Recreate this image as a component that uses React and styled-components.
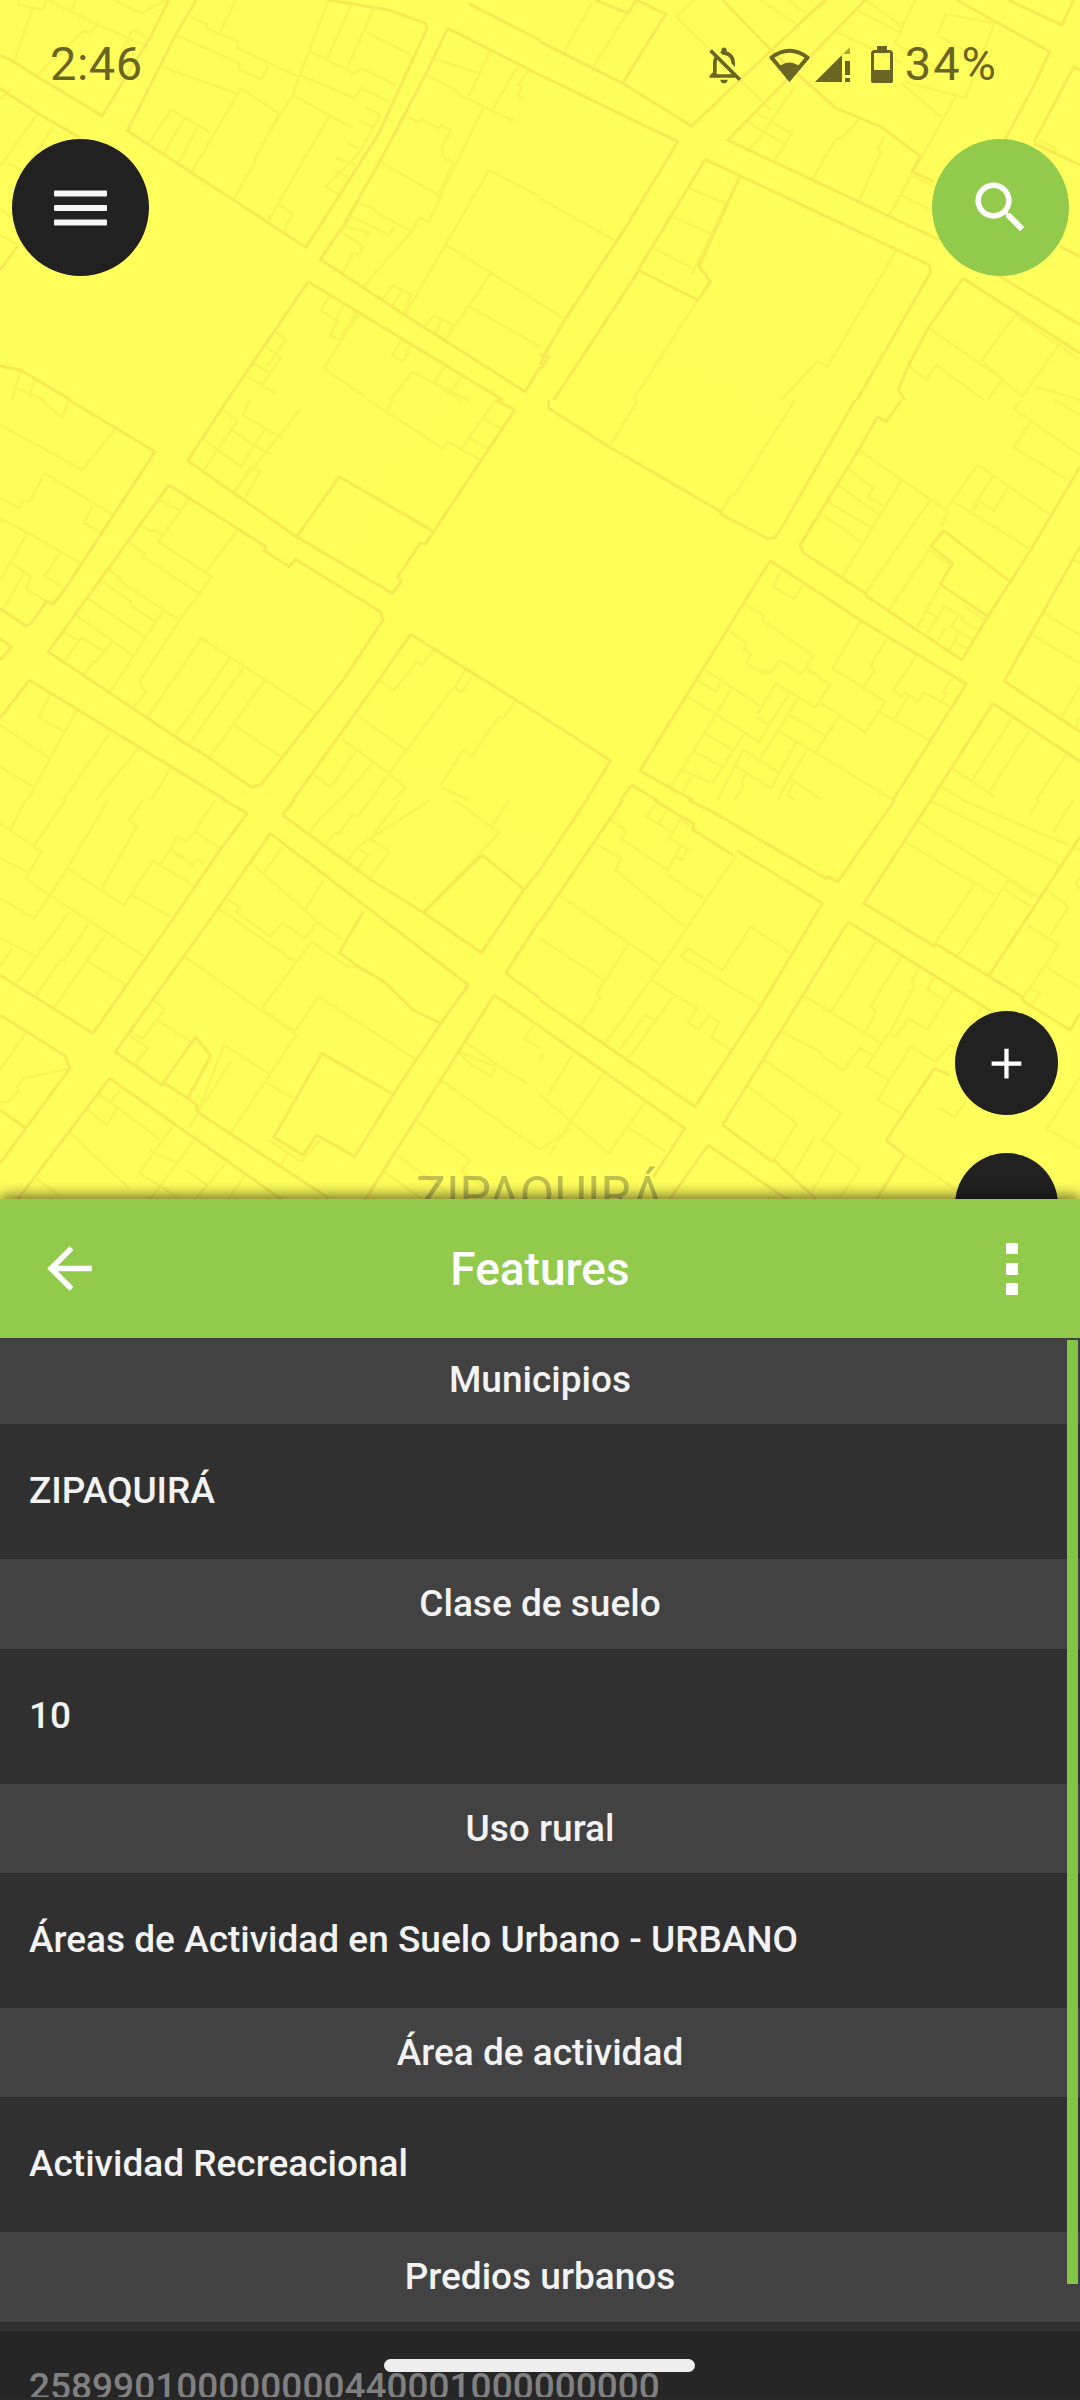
import styled, { createGlobalStyle } from 'styled-components';

// map lines traced per tile, in tile coords (1568x1200 for a 540x400 piece of the map)
const MAP_TILES = [
  {
    x: 0, y: 0,
    strong: [
      '0,165 40,185 105,228 297,347 360,240 435,115 490,0',
      '0,265 110,340 235,415',
      '570,0 510,105 370,392 888,742 980,595 1100,400 1240,85 1235,70 1130,30 955,0',
      '1300,85 1240,215 1100,490 995,680 930,778 1175,945 1525,1175 1568,1100',
      '1300,85 1568,225',
      '895,845 660,1200',
      '895,845 1460,1200',
      '1360,10 1520,95 1568,120',
      '0,1098 60,1110 205,1200',
      '50,740 0,810',
    ],
    weak: [
      '140,0 285,75 430,140', '330,0 410,40 480,0', '50,0 55,15 125,28 135,0', '95,25 40,185', '220,0 205,40',
      '285,75 265,95 240,95 105,228', '385,90 430,115', '385,90 355,150',
      '550,50 600,72 600,85 690,125 690,145 870,232', '640,95 685,0', '510,105 695,190 695,210 760,238 780,195',
      '470,200 685,280', '700,265 810,340', '700,265 555,518', '498,330 430,430', '498,330 615,400', '535,355 475,460',
      '575,378 518,490', '810,340 780,400 740,475 740,490 715,530 680,598', '955,0 870,225 850,285 780,400',
      '850,285 1025,385', '955,350 780,660', '810,615 850,640 825,692', '900,155 1030,220 1050,205 1150,255',
      '870,225 1030,295 1050,265 1130,305', '1020,15 950,175', '1085,25 1010,200', '1060,95 1195,165',
      '1060,320 1105,345 1035,470 945,560 985,585', '1040,360 1090,385', '1010,430 1050,450', '975,475 1030,495',
      '970,510 1010,530', '1245,170 1390,220', '1425,150 1360,290', '1240,225 1330,275 1335,285 1490,362',
      '1505,195 1430,330', '1535,210 1505,255 1515,260 1505,285 1525,298', '1405,320 1280,585',
      '1180,350 1220,368 1225,358 1275,385 1280,375 1310,390 1285,435 1285,470 1315,490 1275,580',
      '1105,485 1280,590 1245,665 1220,652 1195,695 1090,635 1085,625 1040,610 1000,680 1070,695 1060,710',
      '1020,650 1130,705 1145,680', '990,695 1055,740 1040,765 1025,760 995,820', '1195,695 1055,860',
      '1420,510 1175,945', '1420,510 1568,590', '1295,735 1568,910', '1425,820 1290,1025', '1365,920 1568,1040',
      '1140,855 1110,900', '1140,855 1195,885 1170,940', '1165,875 1140,915', '1260,945 1230,985',
      '1260,945 1315,975 1295,1025', '1285,960 1260,1005', '930,930 960,885', '930,930 980,965 960,1005 985,1020 1035,935',
      '1000,910 975,960', '800,995 830,1020 775,1100', '775,1040 815,1075 760,1155', '735,1090 785,1120', '710,1125 800,1180',
      '1165,1020 1140,1065 1170,1085 1195,1035', '940,1105 1045,935', '940,1105 1060,1190', '1195,1115 1135,1200',
      '1195,1115 1360,1200', '1290,1100 1260,1150', '1340,1130 1305,1180', '1260,1150 1340,1200', '60,1110 35,1200',
      '100,1140 85,1195', '50,1165 130,1200', '0,300 30,270', '110,340 0,500', '155,380 70,510', '25,490 70,515',
      '0,625 30,650', '0,705 50,735',
    ],
  },
  {
    x: 540, y: 0,
    strong: [
      '0,125 240,250 440,378 780,45 830,0',
      '0,225 400,425 250,680 75,955 15,1060 0,1095',
      '0,1065 25,1070 0,1110',
      '480,478 285,810 458,900 495,845 462,798 580,530',
      '480,478 1130,795 1135,815 920,1200',
      '285,815 40,1200',
      '945,0 545,420 1160,720',
      '1330,825 1568,975',
      '1510,740 1568,770',
      '1228,835 1568,1060',
      '1228,835 1130,980 1070,1095 1040,1170 1060,1200',
      '530,0 680,160 860,325 990,380 1105,470 1080,515 1145,545',
      '1210,0 1480,155 1435,255 1350,420',
      '1360,0 1515,75 1550,0',
      '1435,425 1550,200 1568,210',
      '1435,430 1568,495',
      '160,0 255,40 280,0 365,42 240,250',
    ],
    weak: [
      '150,10 70,155', '250,45 155,200', '395,50 450,0', '395,50 670,330', '720,0 775,40', '640,0 740,70',
      '860,95 1050,190', '945,0 1040,70 1050,95 1030,130 1155,205', '1090,0 1045,95', '1180,40 1155,105 1320,205',
      '1320,70 1235,295', '1190,45 1320,70', '1050,250 1165,350', '920,30 1050,100', '855,95 750,210', '1210,285 1010,650',
      '1060,245 1235,295', '625,335 730,400 680,480', '600,365 715,435', '650,400 610,445', '740,260 650,395',
      '925,360 875,415 860,415 790,540', '1000,410 980,450 990,455 925,605', '1080,525 1145,560', '1050,585 1145,635',
      '1080,525 1015,645', '0,595 215,720', '0,910 75,960', '435,565 490,590 540,610', '385,650 495,700', '330,745 445,805',
      '540,610 440,825', '1035,750 835,1100 805,1085 700,1200', '455,905 270,1200', '1130,985 1340,1135',
      '1380,945 1280,1085', '1380,945 1568,1080', '1510,1030 1400,1190', '1070,1095 1120,1140 1150,1095 1290,1200',
      '1290,1090 1400,1190', '1345,1135 1300,1200', '1440,1160 1568,1200', '1445,420 1500,445 1490,460 1450,440',
    ],
  },
  {
    x: 0, y: 400,
    strong: [
      '200,0 450,155 190,565 155,612 135,605 92,668 75,678 0,625',
      '545,182 660,0',
      '545,182 860,410 1140,580 1165,545 1155,530 1220,430 1235,432 1495,30 1440,0',
      '862,410 985,230 1255,392',
      '490,255 140,755 545,1035 580,1055 730,1162 758,1153 820,1072 1000,835 1112,660 1105,635 858,478 840,500 768,452 772,440 490,255',
      '85,840 0,955',
      '85,840 655,1200',
      '0,715 33,742 0,780',
      '1192,703 1100,840 905,1122 850,1200',
      '1192,703 1568,945',
    ],
    weak: [
      '0,75 240,210 335,85', '130,220 85,305 65,302 55,322 0,295', '130,220 330,345', '270,315 245,368 290,398',
      '80,398 235,490', '0,540 80,398 5,358 0,365', '175,460 130,528 185,565', '35,490 90,530 75,565 135,605',
      '70,520 10,625', '120,0 180,52 200,0', '590,118 700,200 770,85', '650,30 690,62 630,150 590,215', '630,150 700,200',
      '675,90 735,135', '705,45 820,115', '735,135 790,165', '725,0 705,45', '870,30 680,275', '728,200 755,215 710,295',
      '728,200 680,275', '1070,0 1285,145 1300,125 1340,148 1395,180', '1140,0 1125,30', '1340,145 1440,0',
      '1400,55 1455,85', '1365,115 1415,145', '465,300 520,330', '550,295 460,425 615,530 515,670', '690,390 598,515',
      '415,378 440,395 445,388 470,405', '370,425 420,460 415,470 578,580', '315,510 350,535 350,545 520,660',
      '290,540 380,605 378,615 450,665', '255,595 425,715', '220,645 390,770', '185,695 225,720', '237,712 188,782',
      '237,712 300,755', '325,725 280,785 270,785 245,825', '472,635 320,875', '515,670 405,845 415,868 425,875 390,920',
      '585,715 430,950', '585,715 918,940', '668,775 510,1005', '708,802 548,1035', '768,842 610,1070', '680,975 815,1070',
      '145,885 113,952 185,995', '222,930 80,1200', '0,975 145,1075', '0,1100 95,1160', '320,995 185,1200',
      '400,1045 280,1200', '495,1105 440,1200', '1260,750 1225,795 1210,785 1145,870 1100,840',
      '1350,810 1320,865 1340,878 1370,830', '1495,905 1460,955 1448,950 1370,1068 1345,1050 1280,1155',
      '1315,865 1130,1120', '1035,945 1180,1050', '990,1015 1130,1120 1178,1165 1140,1200',
      '1035,1050 960,1162 905,1120', '1085,1085 990,1200', '1280,1160 1360,1200', '1130,1120 1075,1200',
    ],
  },
  {
    x: 540, y: 400,
    strong: [
      '25,0 25,25 200,140 525,335 525,342 660,415 680,415 695,395 915,0',
      '980,50 925,150 755,435 765,458 945,580 950,590 1225,780 1300,650 1425,450 1568,200',
      '980,50 1005,65 1050,0',
      '668,482 290,1112 380,1165 445,1200',
      '668,482 930,660 1238,852 1025,1200',
      '0,945 205,1082 135,1200',
      '1172,392 1135,438 1198,490 1162,552 1300,650',
      '1172,392 1365,545',
      '1348,843 1568,440',
      '1348,843 1568,995',
      '1315,910 1135,1200',
      '1315,910 1568,1085',
      '265,1155 235,1200',
      '265,1155 340,1200',
    ],
    weak: [
      '285,0 205,135', '740,0 565,285 558,282 525,335', '1380,30 1568,165', '1425,65 1375,142 1530,238', '1375,30 1400,0',
      '1495,0 1568,45', '925,150 1185,335 1165,380', '1272,195 1180,325', '1272,195 1475,340', '1315,228 1250,332',
      '1360,260 1318,332 1278,305 1255,335', '1200,305 1420,445', '895,207 968,262 952,292 1003,322', '865,255 985,345',
      '835,305 965,385', '815,340 935,428', '1050,240 878,530', '1132,302 945,580', '1130,450 1015,628', '1130,450 1190,495',
      '1160,560 1095,682', '1125,635 1150,650', '1175,618 1125,700', '1175,618 1230,652 1225,660 1270,690',
      '1215,645 1195,680 1255,718', '1180,685 1155,720', '1215,700 1190,750', '1205,725 1240,745', '1228,615 1290,660',
      '700,510 678,560 738,597 768,550',
      '592,610 650,645 645,660 795,768 758,822 695,780 668,820 655,812 650,822 598,788 612,762 592,745 600,728 548,692',
      '775,805 842,855 800,922 685,850 630,945', '930,665 850,805 1003,905 945,997 815,908',
      '1008,715 960,798 972,810 940,860', '1092,770 1025,872 1050,890 1060,878 1098,905 1115,877 1190,920',
      '1198,835 1170,875 1182,880 1165,905', '1068,890 1030,955', '985,935 1132,1022', '478,808 640,918',
      '458,842 512,875 525,848', '555,868 378,1165', '428,890 590,995', '725,878 635,1027 595,998 500,1150',
      '625,950 665,975', '750,895 640,1075', '478,1000 558,1048', '445,1052 528,1100', '412,1110 495,1148',
      '440,1130 412,1180', '725,945 830,1008', '695,995 800,1058', '868,950 800,1058 1025,1200',
      '745,1025 695,1118 590,1050 515,1200', '570,1100 672,1165 695,1118', '775,1050 725,1135 690,1200',
      '595,1125 585,1150 590,1158 565,1200', '725,1135 820,1200', '735,1150 720,1185 740,1200', '1465,640 1568,705',
      '1430,705 1568,790', '1568,860 1515,950', '1568,950 1555,985', '1370,955 1255,1140', '1422,990 1305,1175',
      '1530,1060 1440,1200', '1198,1105 1320,1190', '1165,1160 1230,1200', '1568,490 1550,480',
    ],
  },
  {
    x: 0, y: 800,
    strong: [
      '650,0 718,40 640,148 500,360 270,700 0,525',
      '0,645 190,768 203,805 0,1090',
      '785,100 630,330 335,755 470,855 478,850 545,895 572,915 572,935 955,1195',
      '785,100 1360,555 1280,670 1150,870 1030,1070 920,1005 880,1065 795,1012 935,760 1145,885',
      '820,45 855,0',
      '820,45 1075,238 1230,338 1400,165 1522,268 1398,458 1230,338',
      '1522,268 1568,210',
      '1055,335 985,458 1040,500 1115,545 1200,630 1280,670',
      '568,710 470,855',
      '568,710 612,768 545,895',
      '318,835 50,1200',
      '318,835 820,1200',
      '1435,585 1060,1200',
      '1435,585 1568,680',
      '1468,520 1568,595',
      '1468,520 1568,360',
      '0,930 75,985',
    ],
    weak: [
      '75,0 30,88', '190,0 100,135', '315,0 195,205 145,285 100,355 0,295', '0,70 120,155 75,235 150,290', '0,175 78,215',
      '415,0 375,60 398,80 295,265', '195,205 360,315 445,182 555,252', '515,108 495,148 560,195 572,178 595,190',
      '515,108 542,125 565,95 640,145', '625,0 555,110', '495,148 465,195', '385,285 495,350', '150,290 420,470',
      '202,335 48,550', '258,372 185,482 175,482 105,585', '305,405 155,625', '255,485 365,555', '0,415 105,470',
      '35,445 0,500', '1480,0 1430,75', '1320,0 1450,98 1230,338', '1250,0 1075,115 1040,140 1005,185',
      '1160,0 1075,115 1130,155', '1075,0 1040,50 1025,42 985,100 970,100 945,135', '985,0 960,25 930,55 895,100',
      '1040,145 1068,165 1035,212', '1130,155 1075,235', '820,140 765,220', '730,190 885,330 920,365 993,418',
      '940,240 885,330', '655,295 695,320 685,335 785,410 820,368 885,415 920,365', '635,325 855,485', '905,425 760,625',
      '905,425 1010,500 1045,500', '530,465 860,705 770,845', '925,590 1210,780', '925,590 855,695', '760,625 855,695',
      '445,600 478,628 412,718 375,690', '455,660 570,735', '650,735 780,820', '650,735 580,925', '670,785 550,980',
      '770,845 850,895', '770,845 670,1000', '375,705 430,745 395,795', '415,750 385,800', '285,880 465,1018',
      '350,870 320,905', '255,930 310,975 340,925', '200,995 375,1165', '500,980 405,1120 515,1190', '560,1025 435,1200',
      '655,1090 565,1200', '540,1110 600,1155', '435,1050 515,1090', '710,1130 660,1200', '105,1135 170,1185',
      '1205,960 1365,1080 1340,1115 1415,1165', '1140,1055 1300,1180', '1115,1115 1230,1200', '1280,840 1568,1050',
      '1330,755 1440,800 1428,830 1370,795 1335,760', '1350,725 1450,800 1530,850', '1550,675 1522,715 1568,745',
      '780,1020 875,1085 930,1020', '835,1060 815,1100', '75,700 0,810', '70,835 205,805',
      '70,835 50,860 55,870 25,905 5,905 0,915',
    ],
  },
  {
    x: 540, y: 800,
    strong: [
      '135,0 0,210',
      '240,0 0,365',
      '330,0 445,70 445,90 560,165',
      '430,0 495,32 830,235 835,230 865,245 1030,0',
      '1135,0 940,310 1145,438 1150,432 1400,590 1405,605 1540,690 1568,640',
      '572,152 820,310 640,620 450,920 0,600',
      '0,680 420,985 330,1130',
      '895,365 530,975 675,1085 680,1080 730,1130 800,1195',
      '895,365 1320,640',
      '1145,805 1190,825',
      '1145,805 1005,1020 1058,1065 975,1200',
      '488,1035 375,1200',
      '488,1035 720,1200',
      '1568,110 1305,525',
    ],
    weak: [
      '205,60 248,90 235,115 370,210 410,135 375,115 410,55 445,90', '310,50 345,0', '310,50 380,95', '345,70 370,30',
      '410,135 430,150 410,180 395,170', '160,130 235,175 220,210 420,380', '55,285 345,490', '0,415 185,540',
      '258,430 165,580 175,590 115,680', '570,165 380,455', '475,295 370,225', '612,380 530,510 430,445 410,470 640,615',
      '612,380 725,458', '380,455 190,730', '320,538 455,625 430,668 460,688 490,648 520,665 498,712 555,750',
      '385,590 258,775', '305,645 330,660', '305,645 230,750', '100,755 20,890', '185,820 95,955 30,1060', '0,885 200,1060',
      '305,905 200,1060', '260,985 365,1055', '88,985 0,1050', '10,760 0,780', '975,425 845,635',
      '1050,470 960,620 975,632 965,660 945,695', '1100,505 1080,540 1085,560 1015,700 1030,712 1070,655 1125,688 1200,565',
      '1145,530 1125,568 1175,600', '1285,620 1240,690', '770,590 985,725', '700,695 805,750 830,775 880,812 928,745 965,765',
      '650,780 875,940', '605,860 745,970 680,1080', '875,940 820,1020 930,1105', '798,1010 730,1130', '858,1055 790,1175',
      '930,1105 870,1195', '1075,740 1148,785 1190,735 1210,745', '1075,740 980,900 1048,940', '1010,700 948,800 1010,840',
      '1160,925 1205,952 1240,900', '1060,1065 1210,1170', '1060,125 1260,250', '1100,65 1445,290', '1130,0 1510,195',
      '1225,0 1535,135', '1265,245 1145,435', '1360,240 1215,465', '1320,285 1260,245', '1360,240 1430,290',
      '1345,265 1425,320', '1450,0 1420,45', '1550,0 1490,95', '1415,375 1505,435 1405,590', '1480,275 1535,320 1480,410',
      '1470,500 1568,565', '1568,830 1470,990', '1480,990 1568,1045', '1420,565 1450,580 1425,620', '1400,595 1420,565',
      '1568,230 1555,250 1568,265', '1568,150 1550,145',
    ],
  },
];

const FEATURES = [
  { title: 'Municipios', value: 'ZIPAQUIRÁ' },
  { title: 'Clase de suelo', value: '10' },
  { title: 'Uso rural', value: 'Áreas de Actividad en Suelo Urbano - URBANO' },
  { title: 'Área de actividad', value: 'Actividad Recreacional' },
  { title: 'Predios urbanos', value: '258990100000000440001000000000', dim: true },
];

const PATHS = {
  bellOff:
    'M12 22c1.1 0 2-.9 2-2h-4c0 1.1.9 2 2 2zm0-15.5c2.49 0 4 2.02 4 4.5v.1l2 2V11c0-3.07-1.63-5.64-4.5-6.32V4c0-.83-.67-1.5-1.5-1.5s-1.5.67-1.5 1.5v.68c-.24.06-.47.15-.69.23l1.64 1.64c.18-.02.36-.05.55-.05zM5.41 3.35L4 4.76l2.81 2.81C6.29 8.57 6 9.74 6 11v5l-2 2v1h14.24l1.74 1.74 1.41-1.41L5.41 3.35zM16 17H8v-6c0-.68.12-1.32.34-1.9L16 16.76V17z',
  search:
    'M15.5 14h-.79l-.28-.27C15.41 12.59 16 11.11 16 9.5 16 5.91 13.09 3 9.5 3S3 5.91 3 9.5 5.91 16 9.5 16c1.61 0 3.09-.59 4.23-1.57l.27.28v.79l5 4.99L20.49 19l-4.99-5zm-6 0C7.01 14 5 11.99 5 9.5S7.01 5 9.5 5 14 7.01 14 9.5 11.99 14 9.5 14z',
  add: 'M19 13h-6v6h-2v-6H5v-2h6V5h2v6h6v2z',
  back: 'M20 11H7.83l5.59-5.59L12 4l-8 8 8 8 1.41-1.41L7.83 13H20v-2z',
};

function MapBackdrop() {
  return (
    <MapSvg viewBox="0 0 1080 1200">
      {MAP_TILES.map((tile) => (
        <g key={`${tile.x}-${tile.y}`} transform={`translate(${tile.x} ${tile.y}) scale(${540 / 1568} ${1 / 3})`}>
          {tile.weak.map((points) => (
            <WeakLine key={points} points={points} />
          ))}
          {tile.strong.map((points) => (
            <StrongLine key={points} points={points} />
          ))}
        </g>
      ))}
    </MapSvg>
  );
}

function StatusBar() {
  return (
    <StatusRow>
      <StatusText>2:46</StatusText>
      <StatusIcons>
        <BellIcon viewBox="0 0 24 24">
          <path d={PATHS.bellOff} />
        </BellIcon>
        <WifiIcon viewBox="0 0 41 35">
          <path d="M2.5 10.5 Q20.5 -3 38.5 10.5 L20.5 32 Z" fill="none" stroke="currentColor" strokeWidth="4" strokeLinejoin="round" />
          <path d="M9.5 20 Q20.5 11 31.5 20 L20.5 35 Z" />
        </WifiIcon>
        <SignalIcon viewBox="0 0 35 35">
          <path d="M0 35 L27 8 V35 Z" />
          <path d="M28 7 L35 0 V7 Z" opacity="0.55" />
          <rect x="30" y="14" width="5" height="14" />
          <rect x="30" y="31" width="5" height="4" />
        </SignalIcon>
        <BatteryIcon viewBox="0 0 22 37">
          <rect x="6" y="0" width="10" height="5" />
          <rect x="1.5" y="5.5" width="19" height="30" rx="2" fill="none" stroke="currentColor" strokeWidth="3" />
          <rect x="0" y="24" width="22" height="13" rx="2" />
        </BatteryIcon>
        <StatusText $wide>34%</StatusText>
      </StatusIcons>
    </StatusRow>
  );
}

export default function App() {
  return (
    <>
      <GlobalStyle />
      <Screen>
        <MapArea>
          <MapBackdrop />
          <MapLabel>ZIPAQUIRÁ</MapLabel>
          <MapOverlay>
            <StatusBar />
            <ControlsRow>
              <RoundButton $bg="#212121">
                <svg width="53" height="36" viewBox="0 0 53 36" fill="#f4f4f4">
                  <rect y="0.5" width="53" height="6" rx="1" />
                  <rect y="15" width="53" height="6" rx="1" />
                  <rect y="29.5" width="53" height="6" rx="1" />
                </svg>
              </RoundButton>
              <RoundButton $bg="#92cb4c">
                <svg width="67" height="67" viewBox="0 0 24 24" fill="#fff">
                  <path d={PATHS.search} />
                </svg>
              </RoundButton>
            </ControlsRow>
            <ZoomStack>
              <ZoomButton>
                <svg width="51" height="51" viewBox="0 0 24 24" fill="#fff">
                  <path d={PATHS.add} />
                </svg>
              </ZoomButton>
              <ZoomButton />
            </ZoomStack>
          </MapOverlay>
        </MapArea>

        <Sheet>
          <Toolbar>
            <svg width="67" height="67" viewBox="0 0 24 24" fill="#fff">
              <path d={PATHS.back} />
            </svg>
            <ToolbarTitle>Features</ToolbarTitle>
            <KebabIcon viewBox="0 0 12 52" fill="#fff">
              <rect y="0" width="12" height="11" />
              <rect y="20" width="12" height="12" />
              <rect y="40" width="12" height="12" />
            </KebabIcon>
          </Toolbar>
          <FeatureList>
            {FEATURES.map((item) => (
              <div key={item.title}>
                <FeatureHeader>{item.title}</FeatureHeader>
                <FeatureValue $dim={item.dim}>{item.value}</FeatureValue>
              </div>
            ))}
            <ScrollThumb />
            <NavScrim>
              <NavPill />
            </NavScrim>
          </FeatureList>
        </Sheet>
      </Screen>
    </>
  );
}

const GlobalStyle = createGlobalStyle`
  html, body {
    margin: 0;
    padding: 0;
    background: #303030;
  }
`;

const Screen = styled.div`
  width: 1080px;
  height: 2400px;
  display: flex;
  flex-direction: column;
  overflow: hidden;
  font-family: Roboto, 'Liberation Sans', sans-serif;
`;

const MapArea = styled.div`
  position: relative;
  height: 1199px;
  flex: none;
  overflow: hidden;
  background: radial-gradient(circle at 600px 600px, #ffff56, #ffff5c 520px);
`;

const MapSvg = styled.svg`
  position: absolute;
  inset: 0;
  width: 1080px;
  height: 1200px;
  fill: none;
`;

const WeakLine = styled.polyline`
  fill: none;
  stroke: #f8f454;
  stroke-width: 2.6px;
  vector-effect: non-scaling-stroke;
`;

const StrongLine = styled.polyline`
  fill: none;
  stroke: #f6e952;
  stroke-width: 3px;
  stroke-linejoin: round;
  vector-effect: non-scaling-stroke;
`;

const MapLabel = styled.div`
  position: absolute;
  left: 416px;
  top: 1166px;
  font-size: 50px;
  line-height: 58px;
  color: rgba(80, 80, 60, 0.36);
`;

const MapOverlay = styled.div`
  position: relative;
  display: flex;
  flex-direction: column;
`;

const StatusRow = styled.div`
  height: 139px;
  box-sizing: border-box;
  display: flex;
  justify-content: space-between;
  align-items: flex-start;
  padding: 37px 82px 0 50px;
  color: #6b6524;
`;

const StatusText = styled.span`
  font-size: 47px;
  line-height: 54px;
  letter-spacing: ${(p) => (p.$wide ? '2px' : '0.5px')};
`;

const StatusIcons = styled.div`
  display: flex;
  align-items: flex-start;
`;

const BellIcon = styled.svg`
  width: 44px;
  height: 44px;
  margin: 6px 23px 0 0;
  fill: currentColor;
`;

const WifiIcon = styled.svg`
  width: 41px;
  height: 35px;
  margin: 10px 5px 0 0;
  fill: currentColor;
`;

const SignalIcon = styled.svg`
  width: 35px;
  height: 35px;
  margin: 10px 21px 0 0;
  fill: currentColor;
`;

const BatteryIcon = styled.svg`
  width: 22px;
  height: 37px;
  margin: 9px 12px 0 0;
  fill: currentColor;
`;

const ControlsRow = styled.div`
  display: flex;
  justify-content: space-between;
  padding: 0 11px 0 12px;
`;

const RoundButton = styled.div`
  width: 137px;
  height: 137px;
  border-radius: 50%;
  background: ${(p) => p.$bg};
  display: flex;
  align-items: center;
  justify-content: center;
`;

const ZoomStack = styled.div`
  display: flex;
  flex-direction: column;
  align-items: flex-end;
  gap: 38px;
  margin-top: 735px;
  padding-right: 22px;
`;

const ZoomButton = styled.div`
  width: 103px;
  height: 104px;
  flex: none;
  border-radius: 50%;
  background: #212121;
  display: flex;
  align-items: center;
  justify-content: center;
`;

const Sheet = styled.div`
  position: relative;
  flex: 1;
  display: flex;
  flex-direction: column;
  min-height: 0;
  background: #303030;
  box-shadow: 0 -3px 14px rgba(0, 0, 0, 0.6);
`;

const Toolbar = styled.div`
  height: 139px;
  flex: none;
  box-sizing: border-box;
  padding: 0 36px;
  display: grid;
  grid-template-columns: 1fr auto 1fr;
  align-items: center;
  background: #92cb4c;
`;

const ToolbarTitle = styled.h1`
  margin: 0;
  font-size: 46px;
  font-weight: 500;
  color: #fff;
`;

const KebabIcon = styled.svg`
  justify-self: end;
  margin-right: 26px;
  width: 12px;
  height: 52px;
`;

const FeatureList = styled.div`
  position: relative;
  flex: 1;
  min-height: 0;
  overflow: hidden;
  display: flex;
  flex-direction: column;
  & > div:first-child {
    margin-top: -3px;
  }
`;

const FeatureHeader = styled.div`
  height: 89.33px;
  display: flex;
  align-items: center;
  justify-content: center;
  background: #424242;
  color: #f2f2f2;
  font-size: 37px;
  font-weight: 500;
`;

const FeatureValue = styled.div`
  height: 135px;
  box-sizing: border-box;
  padding: ${(p) => (p.$dim ? '43px 29px 0' : '45px 29px 0')};
  background: #303030;
  color: ${(p) => (p.$dim ? '#a0a0a0' : '#f2f2f2')};
  font-size: 37px;
  font-weight: 500;
  line-height: 44px;
`;

const ScrollThumb = styled.div`
  position: absolute;
  top: 2px;
  right: 2px;
  width: 11px;
  height: 944px;
  background: #82c444;
`;

const NavScrim = styled.div`
  position: absolute;
  left: 0;
  right: 0;
  bottom: 0;
  height: 66px;
  border-bottom: 3px solid #282828;
  background: rgba(0, 0, 0, 0.2);
`;

const NavPill = styled.div`
  position: absolute;
  left: 384px;
  top: 28px;
  width: 311px;
  height: 13px;
  border-radius: 7px;
  background: #eeeeee;
`;
